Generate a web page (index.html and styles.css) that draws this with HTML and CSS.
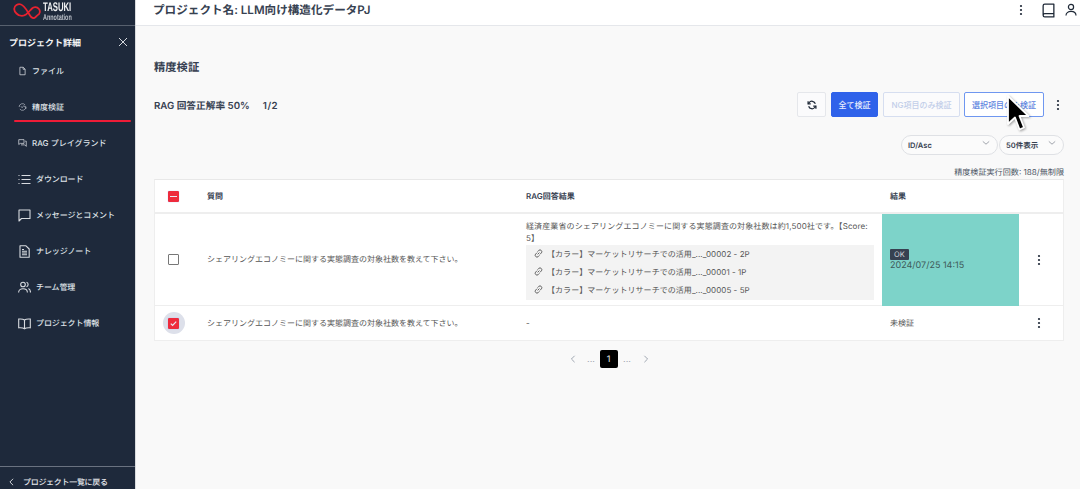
FILE: index.html
```html
<!DOCTYPE html>
<html lang="ja">
<head>
<meta charset="utf-8">
<title>精度検証</title>
<link rel="stylesheet" href="styles.css">
</head>
<body>
<div class="app">
  <aside class="sidebar">
    <div class="logo">
      <svg class="logo-mark" viewBox="0 0 28 17" fill="none"><path d="M1.200 6C1.200 2.500 5 .5 8 1.500C11 2.500 13 6 15.500 10C16.800 12.500 18.500 15.500 21 15C23 14.600 23.200 12.800 24.800 12C27 11 27.500 8 26 6C24 3.800 21 3.600 19 5.500C17 7.400 15.500 9.500 13 11.500C10 13.500 6 13 3.500 10.500C2 9 1.200 7.500 1.200 6Z" stroke="#e8222f" stroke-width="1.800" stroke-linejoin="round"/></svg>
      <div class="logo-text"><span class="logo-name">TASUKI</span><span class="logo-sub">Annotation</span></div>
    </div>
    <div class="side-head"><span>プロジェクト詳細</span>
      <svg class="close" viewBox="0 0 10 10" fill="none" stroke="#d5d8de" stroke-width="1"><path d="M1 1l8 8M9 1L1 9"/></svg>
    </div>
    <nav class="nav">
      <a class="item"><svg class="ic-s" viewBox="0 0 12 12" fill="none" stroke="#d8dbe0" stroke-width="1"><path d="M2.500 1h4.500l2.500 2.500V11h-7z"/><path d="M6.800 1v2.700h2.700"/></svg><span>ファイル</span></a>
      <a class="item active"><svg class="ic-s" viewBox="0 0 12 12" fill="none" stroke="#b9bec8" stroke-width=".9"><path d="M1.500 6a4.500 4.500 0 0 1 8-2.800M10.500 6a4.500 4.500 0 0 1-8 2.800"/><path d="M4 5l1.500 2L8 3.800M8 5.500h2.500v3"/></svg><span>精度検証</span></a>
      <a class="item"><svg class="ic-s" viewBox="0 0 12 12" fill="none" stroke="#d8dbe0" stroke-width="1"><path d="M1 1.500h7v5H3L1 8z"/><path d="M4 8.500h5l2 2v-7H9.500"/></svg><span>RAG プレイグランド</span></a>
      <a class="item wide"><svg class="ic-l" viewBox="0 0 13 13" fill="none" stroke="#d8dbe0" stroke-width="1.100"><path d="M3.500 2.500H12.500M3.500 6.500H12.500M3.500 10.500H12.500"/><path d="M.5 2.500h1M.5 6.500h1M.5 10.500h1"/></svg><span>ダウンロード</span></a>
      <a class="item wide"><svg class="ic-l" viewBox="0 0 13 13" fill="none" stroke="#d8dbe0" stroke-width="1.100"><path d="M1 1h11v8.500H3.500L1 12z" stroke-linejoin="round"/></svg><span>メッセージとコメント</span></a>
      <a class="item wide"><svg class="ic-l" viewBox="0 0 13 13" fill="none" stroke="#d8dbe0" stroke-width="1.100"><path d="M2 .8h6l3.200 3.200v8.200H2z" stroke-linejoin="round"/><path d="M4 6.200h5M4 8h5M4 9.800h5M4 4.500h2"/></svg><span>ナレッジノート</span></a>
      <a class="item wide"><svg class="ic-l" viewBox="0 0 13 13" fill="none" stroke="#d8dbe0" stroke-width="1.100"><circle cx="5" cy="3.500" r="2.300"/><path d="M.6 11.500c0-5 8.800-5 8.800 0"/><path d="M8.500 1.300a2.300 2.300 0 0 1 0 4.400M10.500 7.500c1.300.7 2 2 2 4"/></svg><span>チーム管理</span></a>
      <a class="item wide"><svg class="ic-l" viewBox="0 0 13 13" fill="none" stroke="#d8dbe0" stroke-width="1.100"><path d="M6.500 3C5 1.800 3 1.800.7 2v8.800c2.300-.2 4.300-.2 5.800 1 1.500-1.200 3.500-1.200 5.800-1V2C10 1.800 8 1.800 6.500 3zM6.500 3v8.800"/></svg><span>プロジェクト情報</span></a>
    </nav>
    <div class="back">
      <svg class="back-ic" viewBox="0 0 6 10" fill="none" stroke="#e5e7eb" stroke-width="1.100"><path d="M5 1L1 5l4 4"/></svg>
      <span>プロジェクト一覧に戻る</span>
    </div>
  </aside>
  <div class="main">
    <header class="topbar">
      <h1 class="project">プロジェクト名: LLM向け構造化データPJ</h1>
      <div class="top-icons">
        <svg class="dots" viewBox="0 0 4 14" fill="#1f2937"><circle cx="2" cy="3" r="1.100"/><circle cx="2" cy="7" r="1.100"/><circle cx="2" cy="11" r="1.100"/></svg>
        <svg class="top-book" viewBox="0 0 12 14" fill="none" stroke="#1f2937" stroke-width="1.200"><path d="M1 11.500V2.500A1.500 1.500 0 0 1 2.500 1H11v12H2.500A1.500 1.500 0 0 1 1 11.500zA1.500 1.500 0 0 1 2.500 10H11" stroke-linejoin="round"/></svg>
        <svg class="top-user" viewBox="0 0 12 14" fill="none" stroke="#1f2937" stroke-width="1.200"><circle cx="6" cy="4" r="2.600"/><path d="M1 12.500c0-5.500 10-5.500 10 0"/></svg>
      </div>
    </header>
    <main class="content">
      <h2 class="title">精度検証</h2>
      <div class="toolbar">
        <div class="rate">RAG 回答正解率 50%<span class="rate-count">1/2</span></div>
        <div class="actions">
          <button class="btn btn-icon"><svg viewBox="0 0 12 12" fill="none" stroke="#1f2937" stroke-width="1.500"><path d="M10 4.500A4.200 4.200 0 0 0 2.500 3.300L1.500 4.500M2 7.500a4.200 4.200 0 0 0 7.500 1.200l1-1.200"/><path d="M1.300 1.500v3.200h3.200M10.700 10.500V7.300H7.500"/></svg></button>
          <button class="btn btn-primary">全て検証</button>
          <button class="btn btn-disabled">NG項目のみ検証</button>
          <button class="btn btn-outline">選択項目のみ検証</button>
          <svg class="dots tool-dots" viewBox="0 0 4 14" fill="#1f2937"><circle cx="2" cy="3" r="1.100"/><circle cx="2" cy="7" r="1.100"/><circle cx="2" cy="11" r="1.100"/></svg>
        </div>
      </div>
      <div class="filters">
        <div class="select select-sort"><span>ID/Asc</span><svg viewBox="0 0 10 6" fill="none" stroke="#8a8f98"><path d="M1 1l4 3.500L9 1"/></svg></div>
        <div class="select select-count"><span>50件表示</span><svg viewBox="0 0 10 6" fill="none" stroke="#8a8f98"><path d="M1 1l4 3.500L9 1"/></svg></div>
      </div>
      <div class="quota">精度検証実行回数: 188/無制限</div>
      <div class="table">
        <div class="row row-head">
          <div class="cell cell-check"><span class="cb cb-minus"></span></div>
          <div class="cell">質問</div>
          <div class="cell">RAG回答結果</div>
          <div class="cell cell-result">結果</div>
          <div class="cell"></div>
        </div>
        <div class="row row-main">
          <div class="cell cell-check"><span class="cb"></span></div>
          <div class="cell">シェアリングエコノミーに関する実態調査の対象社数を教えて下さい。</div>
          <div class="cell cell-answer">
            <p class="answer">経済産業省のシェアリングエコノミーに関する実態調査の対象社数は約1,500社です。【Score: 5】</p>
            <ul class="sources">
              <li><svg viewBox="0 0 12 12" fill="none" stroke="#555" stroke-width="1"><path d="M5 7l2-2M4.500 5L2.800 6.700a2 2 0 0 0 2.800 2.800L7 8M5 4l1.400-1.500a2 2 0 0 1 2.800 2.800L7.500 7"/></svg>【カラー】マーケットリサーチでの活用_..._00002 - 2P</li>
              <li><svg viewBox="0 0 12 12" fill="none" stroke="#555" stroke-width="1"><path d="M5 7l2-2M4.500 5L2.800 6.700a2 2 0 0 0 2.800 2.800L7 8M5 4l1.400-1.500a2 2 0 0 1 2.800 2.800L7.500 7"/></svg>【カラー】マーケットリサーチでの活用_..._00001 - 1P</li>
              <li><svg viewBox="0 0 12 12" fill="none" stroke="#555" stroke-width="1"><path d="M5 7l2-2M4.500 5L2.800 6.700a2 2 0 0 0 2.800 2.800L7 8M5 4l1.400-1.500a2 2 0 0 1 2.800 2.800L7.500 7"/></svg>【カラー】マーケットリサーチでの活用_..._00005 - 5P</li>
            </ul>
          </div>
          <div class="cell cell-ok"><span class="badge">OK</span><span>2024/07/25 14:15</span></div>
          <div class="cell cell-menu"><svg class="dots" viewBox="0 0 4 14" fill="#1f2937"><circle cx="2" cy="3" r="1.100"/><circle cx="2" cy="7" r="1.100"/><circle cx="2" cy="11" r="1.100"/></svg></div>
        </div>
        <div class="row row-last">
          <div class="cell cell-check"><span class="halo"><span class="cb cb-checked"><svg viewBox="0 0 10 10" fill="none" stroke="#e8e8f5" stroke-width="1.300"><path d="M2 5.200l2 2L8 2.800"/></svg></span></span></div>
          <div class="cell">シェアリングエコノミーに関する実態調査の対象社数を教えて下さい。</div>
          <div class="cell">-</div>
          <div class="cell cell-result">未検証</div>
          <div class="cell cell-menu"><svg class="dots" viewBox="0 0 4 14" fill="#1f2937"><circle cx="2" cy="3" r="1.100"/><circle cx="2" cy="7" r="1.100"/><circle cx="2" cy="11" r="1.100"/></svg></div>
        </div>
      </div>
      <div class="pager">
        <svg class="chev" viewBox="0 0 6 10" fill="none" stroke="#9ca3af" stroke-width="1.200"><path d="M5 1L1 5l4 4"/></svg>
        <span class="ell">...</span>
        <span class="page">1</span>
        <span class="ell">...</span>
        <svg class="chev" viewBox="0 0 6 10" fill="none" stroke="#9ca3af" stroke-width="1.200"><path d="M1 1l4 4-4 4"/></svg>
      </div>
    </main>
  </div>
</div>
<svg class="cursor" viewBox="0 0 26 40"><path d="M2 2v28l7-6.500 4.500 12 4.500-2-4.500-11.500h9z" fill="#000" stroke="#fff" stroke-width="1.800" stroke-linejoin="round"/></svg>
</body>
</html>
```
FILE: styles.css
```css
* { box-sizing: border-box; }
html, body { margin: 0; height: 489px; overflow: hidden; }
body {
  font-family: Inter, "Noto Sans CJK JP", "Noto Sans", sans-serif;
  background: #f9f9f9;
  color: #4b5563;
  font-size: 8px;
  text-rendering: geometricPrecision;
}
.app { display: flex; height: 489px; }

/* Sidebar */
.sidebar {
  width: 136px;
  flex: none;
  display: flex;
  flex-direction: column;
  background: #1e293b;
  color: #e5e7eb;
  border-right: 1px solid #d9dbde;
}
.logo {
  height: 26px;
  flex: none;
  display: flex;
  align-items: center;
  gap: 2px;
  padding: 0 0 2px 13px;
  border-bottom: 1px solid #57606e;
}
.logo-mark { width: 28px; height: 17px; flex: none; }
.logo-text { display: flex; flex-direction: column; line-height: 9px; }
.logo-name {
  font-family: "Liberation Sans", sans-serif;
  font-size: 12.500px;
  line-height: 11px;
  font-weight: 700;
  color: #f0f1f3;
  transform: scaleX(.62);
  transform-origin: left;
}
.logo-sub {
  font-family: "Liberation Sans", sans-serif;
  font-size: 8.500px;
  line-height: 8px;
  font-weight: 700;
  color: #bcc1c9;
  transform: scaleX(.64);
  transform-origin: left;
}
.side-head {
  height: 27px;
  flex: none;
  display: flex;
  justify-content: space-between;
  align-items: center;
  padding: 5px 7px 0 9px;
  font-size: 9px;
  font-weight: 700;
  color: #f3f4f6;
}
.close { width: 10px; height: 10px; }
.nav { flex: 1; display: flex; flex-direction: column; }
.item {
  position: relative;
  height: 36px;
  display: flex;
  align-items: center;
  gap: 5px;
  padding-left: 18px;
  font-size: 8px;
  font-weight: 500;
  color: #dfe2e7;
}
.item.wide { gap: 5px; letter-spacing: -.1px; }
.item.active::after {
  content: "";
  position: absolute;
  left: 14px;
  right: 4px;
  bottom: 3px;
  height: 2px;
  border-radius: 1px;
  background: #ee1c37;
}
.ic-s { width: 9px; height: 10px; flex: none; }
.ic-l { width: 13px; height: 13px; flex: none; }
.back {
  height: 23px;
  flex: none;
  display: flex;
  align-items: center;
  gap: 9px;
  padding: 8px 0 0 9px;
  border-top: 1px solid #6a7280;
  font-size: 8px;
  letter-spacing: -.3px;
  font-weight: 500;
  color: #e5e7eb;
}
.back-ic { width: 5px; height: 8px; }

/* Top bar */
.main { flex: 1; min-width: 0; display: flex; flex-direction: column; }
.topbar {
  height: 26px;
  flex: none;
  display: flex;
  align-items: center;
  justify-content: space-between;
  padding: 0 3px 5px 17px;
  background: #fff;
  border-bottom: 1px solid #e5e7eb;
}
.project { margin: 0; font-size: 11.600px; font-weight: 600; color: #374151; }
.top-icons { display: flex; align-items: center; }
.dots { width: 4px; height: 14px; flex: none; }
.top-book { width: 13px; height: 15px; margin-left: 19px; }
.top-user { width: 12px; height: 14px; margin-left: 10px; }

/* Content */
.content { padding: 34px 16px 0 18px; }
.title { margin: 0; height: 14px; line-height: 14px; font-size: 11.300px; font-weight: 600; color: #374151; }
.toolbar { display: flex; justify-content: space-between; align-items: center; margin-top: 18px; height: 25px; }
.rate { font-size: 9.700px; font-weight: 600; color: #374151; }
.rate-count { margin-left: 13px; letter-spacing: .5px; }
.actions { display: flex; align-items: center; gap: 5px; }
.btn {
  height: 25px;
  padding: 0;
  border-radius: 2px;
  font-family: inherit;
  font-size: 8px;
  font-weight: 500;
  background: #fbfbfc;
  border: 1px solid #e5e7eb;
}
.btn-icon { width: 29px; display: flex; align-items: center; justify-content: center; }
.btn-icon svg { width: 10px; height: 10px; }
.btn-primary { width: 47px; background: #2f62ea; border-color: #2f62ea; color: #e7edfd; }
.btn-disabled { width: 77px; border-color: #d6def0; color: #c2cee9; }
.btn-outline { width: 80px; margin-left: -1px; border-color: #6f97f0; color: #5d84de; background: #fff; }
.tool-dots { margin-left: 7px; margin-right: 4px; }
.filters { display: flex; justify-content: flex-end; gap: 1px; margin-top: 18px; }
.select {
  height: 20px;
  display: flex;
  align-items: center;
  justify-content: space-between;
  border: 1px solid #dfe1e5;
  border-radius: 10px;
  background: #fbfbfb;
  font-size: 7.500px;
  font-weight: 600;
  color: #374151;
  padding: 0 7px 0 6px;
}
.select svg { width: 8px; height: 6px; margin-top: -4px; }
.select-sort { width: 97px; }
.select-count { width: 65px; }
.quota { margin-top: 11px; height: 13px; line-height: 13px; text-align: right; font-size: 8.100px; color: #4b5563; }

/* Table */
.table { background: #fff; border: 1px solid #eeeeee; border-top-color: #e8e8e8; color: #555; }
.row { display: grid; grid-template-columns: 52px 319px 356px 137px 44px; align-items: center; }
.row-head { height: 34px; border-bottom: 2px solid #eeeeee; font-weight: 600; color: #374151; }
.row-main { height: 92px; border-bottom: 1px solid #eeeeee; }
.row-last { height: 34px; }
.cell { font-size: 8px; }
.cell-check { display: flex; justify-content: center; padding-right: 15px; }
.cell-result { padding-left: 8px; }
.cb {
  display: flex;
  align-items: center;
  justify-content: center;
  width: 11px;
  height: 11px;
  border: 1.500px solid #777;
  border-radius: 1px;
}
.cb-minus { background: #ee2b3d; border-color: #ee2b3d; box-shadow: 0 0 1px #8da0ee; }
.cb-minus::after { content: ""; width: 7px; height: 1px; background: #e8e8f5; }
.cb-checked { background: #ee2b3d; border-color: #ee2b3d; box-shadow: 0 0 1px #8da0ee; }
.cb-checked svg { width: 9px; height: 9px; flex: none; }
.halo { width: 22px; height: 22px; border-radius: 50%; background: #dde0ea; display: flex; align-items: center; justify-content: center; flex: none; }
.cell-answer { padding: 6px 8px 6px 0; align-self: stretch; }
.answer { margin: 0; line-height: 12px; letter-spacing: .12px; max-width: 344px; }
.sources { list-style: none; margin: 0; padding: 0; background: #f3f3f3; height: 55px; letter-spacing: .05px; }
.sources li { height: 18px; display: flex; align-items: center; padding-left: 7px; line-height: 18px; }
.sources li:first-child { margin-top: .5px; }
.sources svg { width: 11px; height: 11px; margin-right: 3px; flex: none; }
.cell-ok {
  align-self: stretch;
  display: flex;
  flex-direction: column;
  align-items: flex-start;
  justify-content: center;
  padding: 1px 0 1px 8px;
  background: #7dd3c9;
  color: #3f5b5a;
  font-size: 9px;
}
.badge {
  padding: 0 4px;
  height: 11px;
  line-height: 12px;
  font-size: 7.500px;
  background: #374151;
  color: #d1d5db;
  border-radius: 1px;
}
.cell-menu { display: flex; justify-content: center; padding-right: 4px; }

/* Pager */
.pager { display: flex; justify-content: center; align-items: center; margin-top: 9px; height: 18px; color: #9ca3af; }
.chev { width: 6px; height: 8px; }
.ell { font-size: 9px; margin: 0 4px 0 11px; width: 9px; text-align: center; }
.ell + .page + .ell { margin: 0 11px 0 5px; }
.page { width: 18px; height: 18px; background: #000; color: #e5e7eb; border-radius: 2px; font-size: 9px; display: flex; align-items: center; justify-content: center; }

/* Recording cursor */
.cursor {
  position: absolute;
  left: 1006px;
  top: 93px;
  width: 26px;
  height: 42px;
  filter: drop-shadow(1px 1px 1px rgba(0,0,0,.35));
}
```
